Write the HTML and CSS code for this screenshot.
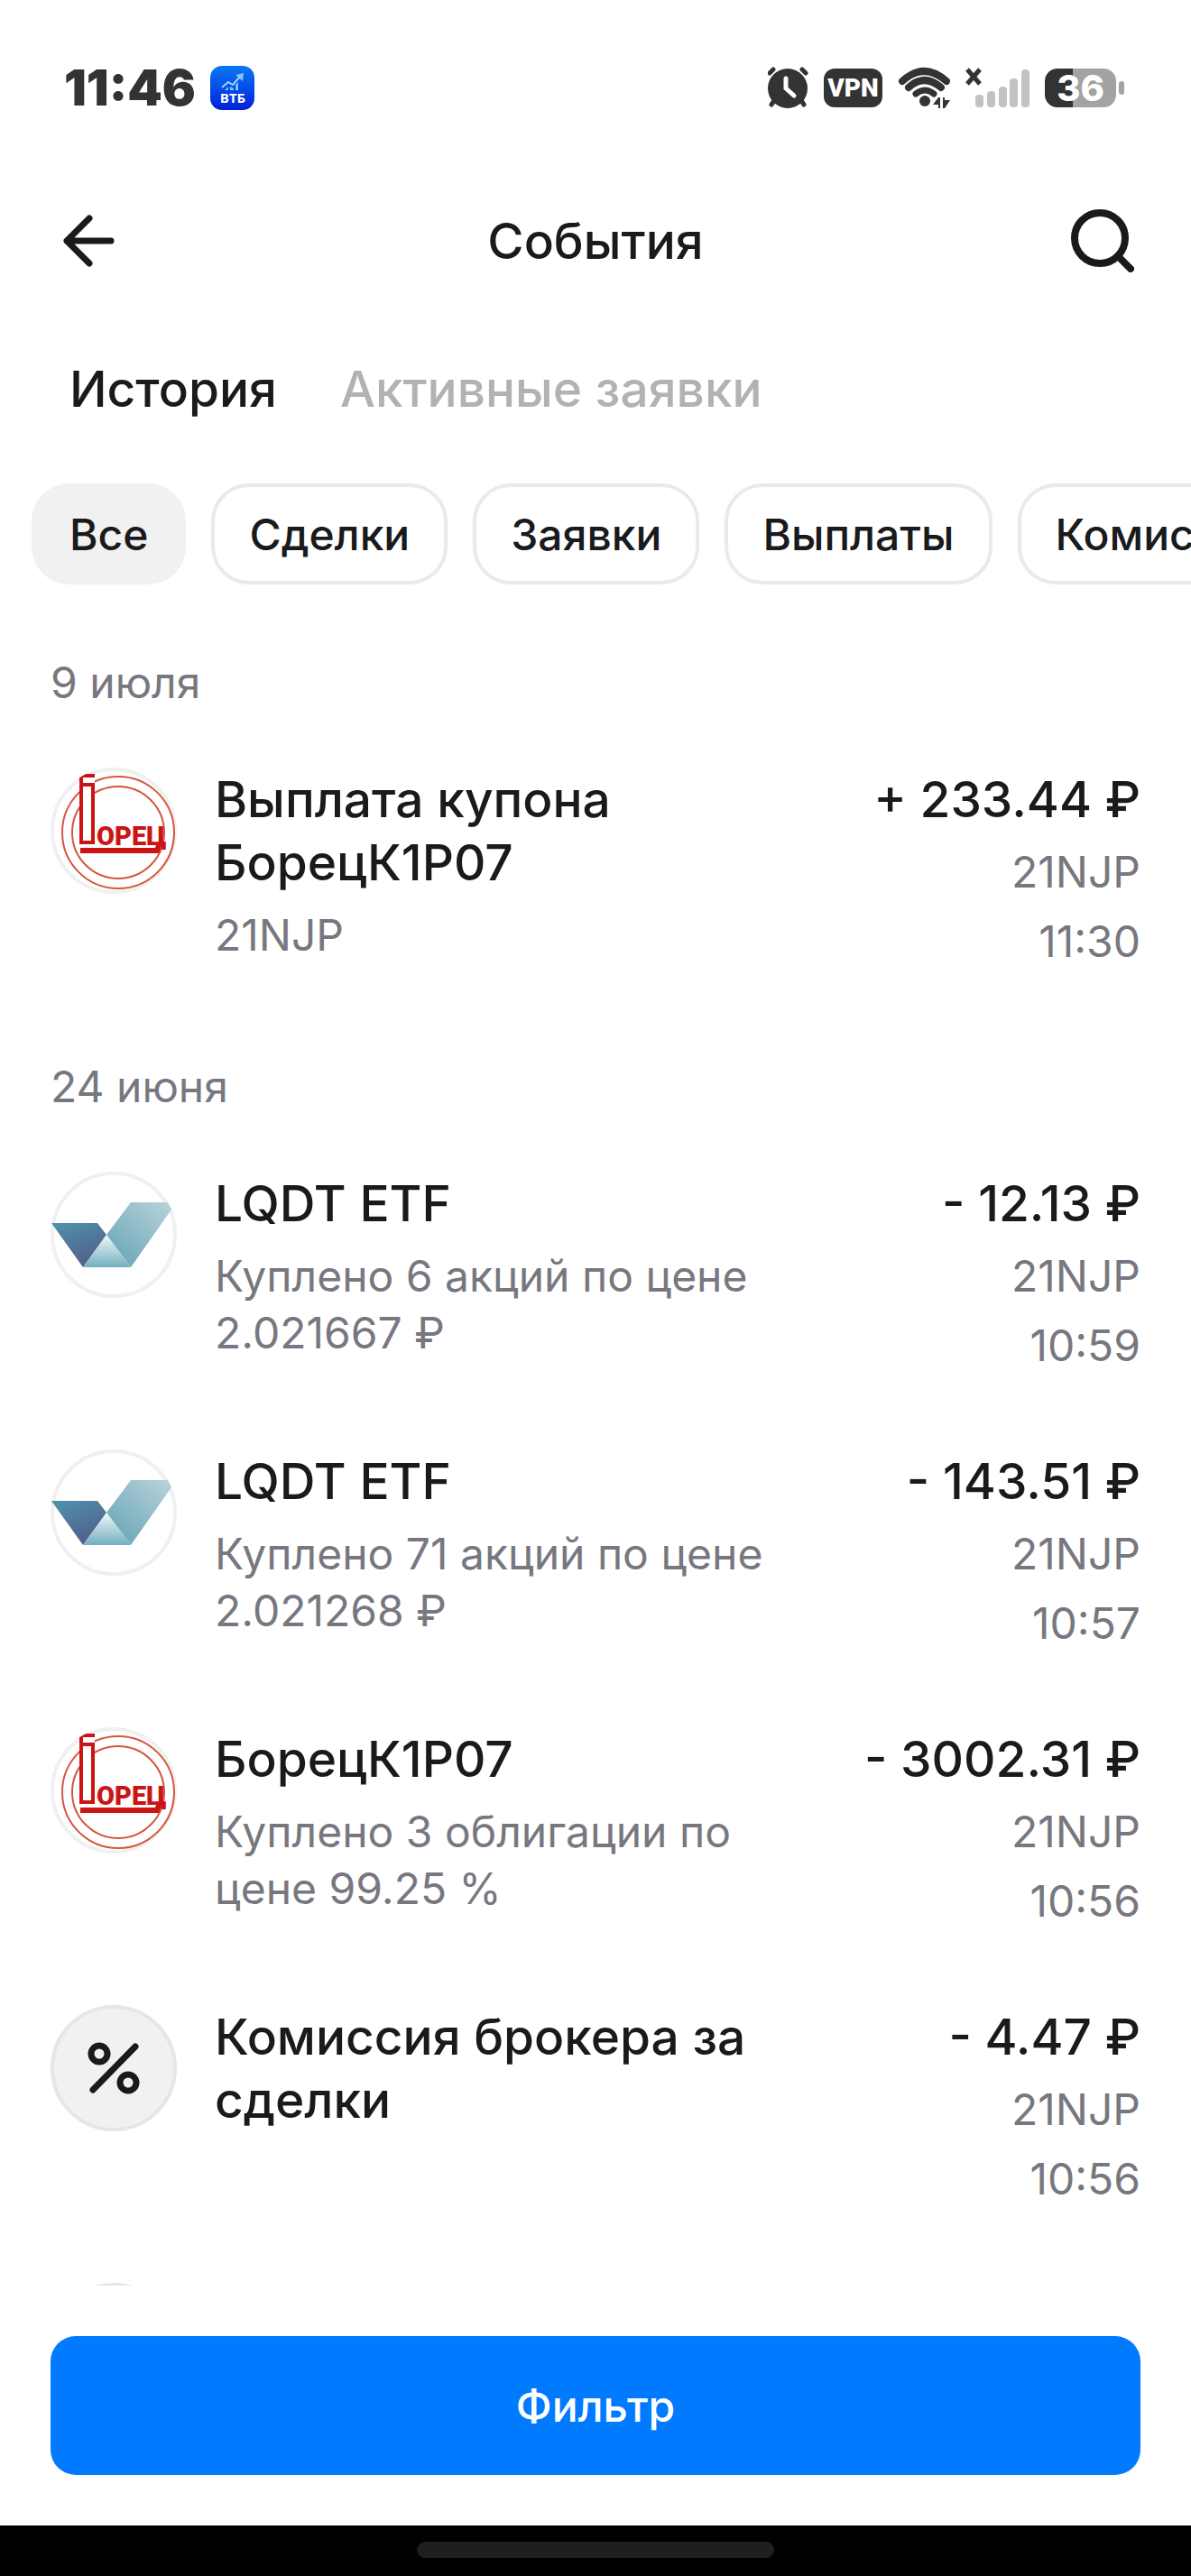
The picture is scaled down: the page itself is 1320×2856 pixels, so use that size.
FILE: index.html
```html
<!DOCTYPE html>
<html lang="ru">
<head>
    <meta charset="UTF-8">
    <meta name="viewport" content="width=device-width, initial-scale=1.0">
    <title>События</title>
    <link rel="stylesheet" href="styles.css">
</head>
<body>
    <!-- Общие иконки -->
    <svg class="sprite" aria-hidden="true">
        <defs>
            <linearGradient id="vtbBg" x1="0" y1="0" x2="0" y2="1">
                <stop offset="0" stop-color="#0a78f2"/>
                <stop offset="1" stop-color="#0020dc"/>
            </linearGradient>
            <linearGradient id="lqdtLeft" x1="0" y1="0" x2="0.5" y2="1">
                <stop offset="0" stop-color="#4f93ac"/>
                <stop offset="1" stop-color="#52608c"/>
            </linearGradient>
            <linearGradient id="lqdtRight" x1="1" y1="0" x2="0.3" y2="0.8">
                <stop offset="0" stop-color="#b9d3db"/>
                <stop offset="1" stop-color="#77aebd"/>
            </linearGradient>
            <linearGradient id="lqdtBottom" x1="0" y1="0" x2="0" y2="1">
                <stop offset="0" stop-color="#f2f8fa"/>
                <stop offset="1" stop-color="#74afc0"/>
            </linearGradient>
            <clipPath id="round"><circle cx="70" cy="70" r="70"/></clipPath>
        </defs>
        <symbol id="borets" viewBox="0 0 140 140">
            <circle cx="70" cy="70" r="68" fill="#fff" stroke="#f0f0f0" stroke-width="4"/>
            <g clip-path="url(#round)">
                <g fill="none" stroke="#d4553f" stroke-width="2">
                    <circle cx="75" cy="72" r="62"/>
                    <circle cx="75" cy="72" r="51"/>
                </g>
                <rect x="32" y="7" width="17" height="78" fill="#fff"/>
                <g fill="none" stroke="#cc1414" stroke-width="4">
                    <path d="M49 9H34V19"/>
                    <rect x="34" y="19" width="13" height="64"/>
                    <path d="M33 92H118L121 84" stroke-width="6"/>
                </g>
            </g>
        </symbol>
        <symbol id="lqdt" viewBox="0 0 140 140">
            <circle cx="70" cy="70" r="68" fill="#fff" stroke="#f0f0f0" stroke-width="4"/>
            <path d="M1 57H52L62 70L36 106Z" fill="url(#lqdtLeft)"/>
            <path d="M62 70L89 34H130L134 42L89 106Z" fill="url(#lqdtRight)"/>
            <path d="M62 70L89 106H36Z" fill="url(#lqdtBottom)"/>
        </symbol>
        <symbol id="percent" viewBox="0 0 140 140">
            <circle cx="70" cy="70" r="68" fill="#f1f1f1" stroke="#e6e6e6" stroke-width="4"/>
            <g fill="none" stroke="#191a1c" stroke-width="7" stroke-linecap="round">
                <circle cx="54" cy="54" r="9"/>
                <circle cx="86" cy="86" r="9"/>
                <path d="M47 94L94 46"/>
            </g>
        </symbol>
    </svg>

    <div class="app">
        <!-- Строка состояния -->
        <div class="status-bar">
            <div class="status-left">
                <span class="clock">11:46</span>
                <svg width="49" height="49" viewBox="0 0 49 49">
                    <rect width="49" height="49" rx="13" fill="url(#vtbBg)"/>
                    <g fill="#7cc4fb">
                        <path d="M17 26L20 23V27H16ZM22 23L26 25V27H22ZM28 21L31 18V27H28Z"/>
                        <path d="M28 10L37 8L36 17Z"/>
                    </g>
                    <path d="M13 24L20 18L25 21L33 12" fill="none" stroke="#9bd8ff" stroke-width="2"/>
                    <text class="vtb-text" x="25" y="41" text-anchor="middle">ВТБ</text>
                </svg>
            </div>
            <div class="status-right">
                <svg width="45" height="46" viewBox="852 73 45 46">
                    <g stroke="#333" stroke-linecap="round" fill="none">
                        <path d="M854 80L858 76M894 80L890 76" stroke-width="5"/>
                        <path d="M860 109L856 115M888 109L892 115" stroke-width="5"/>
                    </g>
                    <circle cx="874" cy="97" r="22" fill="#333"/>
                    <path d="M872 86V97L881 105" fill="none" stroke="#fff" stroke-width="5" stroke-linecap="round"/>
                </svg>
                <span class="vpn">VPN</span>
                <svg width="58" height="48" viewBox="994 73 58 48">
                    <g fill="none" stroke="#333" stroke-width="8" stroke-linecap="round">
                        <path d="M999 90Q1023 68 1048 90"/>
                        <path d="M1006 97Q1023 81 1042 97"/>
                        <path d="M1014 104Q1024 96 1034 104" stroke-width="7"/>
                    </g>
                    <circle cx="1024" cy="112" r="6" fill="#333"/>
                    <path d="M1033 116L1039 108H1041V120H1039V116ZM1044 120V108H1046V111H1052L1046 120Z" fill="#333" stroke="#fff" stroke-width="3" paint-order="stroke"/>
                </svg>
                <svg width="71" height="45" viewBox="1069 74 71 45">
                    <path d="M1071 76L1085 92M1085 76L1071 92" stroke="#333" stroke-width="5"/>
                    <g fill="#c2c2c2">
                        <rect x="1080" y="104" width="9" height="14" rx="4"/>
                        <rect x="1093" y="100" width="9" height="18" rx="4"/>
                        <rect x="1106" y="95" width="9" height="23" rx="4"/>
                        <rect x="1118" y="86" width="9" height="32" rx="4"/>
                        <rect x="1131" y="76" width="9" height="42" rx="4"/>
                    </g>
                </svg>
                <div class="battery">
                    <span class="battery-level">36</span>
                    <span class="battery-tip"></span>
                </div>
            </div>
        </div>

        <!-- Шапка -->
        <header class="header">
            <button class="icon-btn" aria-label="Назад">
                <svg width="70" height="70" viewBox="0 0 70 70">
                    <path d="M36 10L11 35L36 60M11 35H60" fill="none" stroke="#191a1c" stroke-width="7" stroke-linecap="round" stroke-linejoin="round"/>
                </svg>
            </button>
            <h1>События</h1>
            <button class="icon-btn" aria-label="Поиск">
                <svg width="70" height="70" viewBox="0 0 70 70">
                    <circle cx="32" cy="32" r="28" fill="none" stroke="#191a1c" stroke-width="8"/>
                    <path d="M52 52L66 66" stroke="#191a1c" stroke-width="8" stroke-linecap="round"/>
                </svg>
            </button>
        </header>

        <nav class="tabs">
            <a href="#history" class="tab active">История</a>
            <a href="#orders" class="tab">Активные заявки</a>
        </nav>

        <div class="chips">
            <button class="chip active">Все</button>
            <button class="chip">Сделки</button>
            <button class="chip">Заявки</button>
            <button class="chip">Выплаты</button>
            <button class="chip">Комиссии</button>
        </div>

        <!-- Список событий -->
        <main class="list">
            <h2>9 июля</h2>
            <article class="event">
                <svg class="avatar" viewBox="0 0 140 140">
                    <use href="#borets"/>
                    <text class="borets-text" x="51" y="86">ОРЕЦ</text>
                </svg>
                <div class="info">
                    <h3>Выплата купона БорецК1Р07</h3>
                    <p>21NJP</p>
                </div>
                <div class="sum">
                    <strong>+ 233.44 ₽</strong>
                    <span>21NJP</span>
                    <time>11:30</time>
                </div>
            </article>

            <h2>24 июня</h2>
            <article class="event">
                <svg class="avatar" viewBox="0 0 140 140"><use href="#lqdt"/></svg>
                <div class="info">
                    <h3>LQDT ETF</h3>
                    <p>Куплено 6 акций по цене 2.021667 ₽</p>
                </div>
                <div class="sum">
                    <strong>- 12.13 ₽</strong>
                    <span>21NJP</span>
                    <time>10:59</time>
                </div>
            </article>
            <article class="event">
                <svg class="avatar" viewBox="0 0 140 140"><use href="#lqdt"/></svg>
                <div class="info">
                    <h3>LQDT ETF</h3>
                    <p>Куплено 71 акций по цене 2.021268 ₽</p>
                </div>
                <div class="sum">
                    <strong>- 143.51 ₽</strong>
                    <span>21NJP</span>
                    <time>10:57</time>
                </div>
            </article>
            <article class="event">
                <svg class="avatar" viewBox="0 0 140 140">
                    <use href="#borets"/>
                    <text class="borets-text" x="51" y="86">ОРЕЦ</text>
                </svg>
                <div class="info">
                    <h3>БорецК1Р07</h3>
                    <p>Куплено 3 облигации по цене 99.25 %</p>
                </div>
                <div class="sum">
                    <strong>- 3002.31 ₽</strong>
                    <span>21NJP</span>
                    <time>10:56</time>
                </div>
            </article>
            <article class="event">
                <svg class="avatar" viewBox="0 0 140 140"><use href="#percent"/></svg>
                <div class="info">
                    <h3>Комиссия брокера за сделки</h3>
                </div>
                <div class="sum">
                    <strong>- 4.47 ₽</strong>
                    <span>21NJP</span>
                    <time>10:56</time>
                </div>
            </article>
            <article class="event">
                <svg class="avatar" viewBox="0 0 140 140"><use href="#percent"/></svg>
            </article>
        </main>

        <footer class="footer">
            <button class="filter-btn">Фильтр</button>
        </footer>
        <div class="nav-bar"><span></span></div>
    </div>
</body>
</html>
```
FILE: styles.css
```css
* {
    box-sizing: border-box;
}

body {
    margin: 0;
    background: #fff;
    color: #191a1c;
    font-family: Inter, "Liberation Sans", sans-serif;
    font-size: 48px;
    line-height: 63px;
}

h1, h2, h3, p {
    margin: 0;
}

button {
    font-family: inherit;
    color: inherit;
    border: none;
    cursor: pointer;
}

svg {
    display: block;
    flex-shrink: 0;
}

.sprite {
    position: absolute;
    width: 0;
    height: 0;
}

.app {
    display: flex;
    flex-direction: column;
    height: 100vh;
    overflow: hidden;
}

/* Строка состояния */
.status-bar {
    display: flex;
    justify-content: space-between;
    align-items: center;
    padding: 62px 74px 62px 71px;
    color: #333;
}

.status-left {
    display: flex;
    align-items: center;
    gap: 16px;
}

.status-right {
    display: flex;
    align-items: center;
    gap: 17px;
}

.clock {
    font-size: 55px;
    font-weight: 900;
    line-height: 70px;
}

.vtb-text {
    font: 700 15px "Open Sans", sans-serif;
    fill: #fff;
}

.borets-text {
    font: 900 29px Roboto, sans-serif;
    fill: #cc1414;
}

.vpn {
    width: 65px;
    border-radius: 12px;
    background: #333;
    color: #fff;
    font: 900 28px/43px Roboto, sans-serif;
    text-align: center;
}

.battery {
    display: flex;
    align-items: center;
    gap: 3px;
}

.battery-level {
    width: 79px;
    border-radius: 14px;
    background: linear-gradient(to right, #333 39%, #a3a3a3 39%);
    color: #fff;
    font-size: 40px;
    font-weight: 800;
    line-height: 43px;
    text-align: center;
}

.battery-tip {
    width: 6px;
    height: 15px;
    border-radius: 3px;
    background: #a3a3a3;
}

/* Шапка */
.header {
    display: flex;
    justify-content: space-between;
    align-items: center;
    padding: 38px 63px;
}

.header h1 {
    font-size: 55px;
    font-weight: 500;
    line-height: 70px;
}

.icon-btn {
    padding: 0;
    background: none;
}

.tabs {
    display: flex;
    gap: 70px;
    padding: 56px 77px 70px;
}

.tab {
    color: #b2b2b3;
    font-size: 55px;
    font-weight: 500;
    line-height: 70px;
    text-decoration: none;
}

.tab.active {
    color: #191a1c;
}

/* Фильтры по типу */
.chips {
    display: flex;
    gap: 28px;
    padding: 0 35px;
    overflow: hidden;
}

.chip {
    flex-shrink: 0;
    height: 112px;
    padding: 0 38px;
    border: 4px solid #e9eaea;
    border-radius: 42px;
    background: #fff;
    font-size: 48px;
    font-weight: 500;
}

.chip.active {
    border-color: #f1f1f1;
    background: #f1f1f1;
}

/* Список */
.list {
    flex: 1;
    min-height: 0;
    margin-top: 21px;
    padding: 0 56px;
    overflow-y: auto;
    scrollbar-width: none;
}

.list h2 {
    padding: 56px 0 21px;
    color: #77787f;
    font-size: 48px;
    font-weight: 400;
    line-height: 63px;
}

.event {
    display: grid;
    grid-template-columns: 140px 5fr 3fr;
    padding: 42px 0;
}

.avatar {
    width: 140px;
    height: 140px;
}

.info {
    padding-left: 42px;
}

.info h3, .sum strong {
    font-size: 55px;
    font-weight: 500;
    line-height: 70px;
}

.info p {
    margin-top: 14px;
    color: #77787f;
}

.sum {
    display: flex;
    flex-direction: column;
    gap: 14px;
    color: #77787f;
    text-align: right;
}

.sum strong {
    color: #191a1c;
}

/* Низ экрана */
.footer {
    padding: 56px;
}

.filter-btn {
    display: block;
    width: 100%;
    height: 154px;
    border-radius: 28px;
    background: #007aff;
    color: #fff;
    font-size: 48px;
    font-weight: 500;
}

.nav-bar {
    display: flex;
    justify-content: center;
    padding: 18px 0 20px;
    background: #000;
}

.nav-bar span {
    width: 30%;
    height: 18px;
    border-radius: 9px;
    background: #1f1f1f;
}
```
